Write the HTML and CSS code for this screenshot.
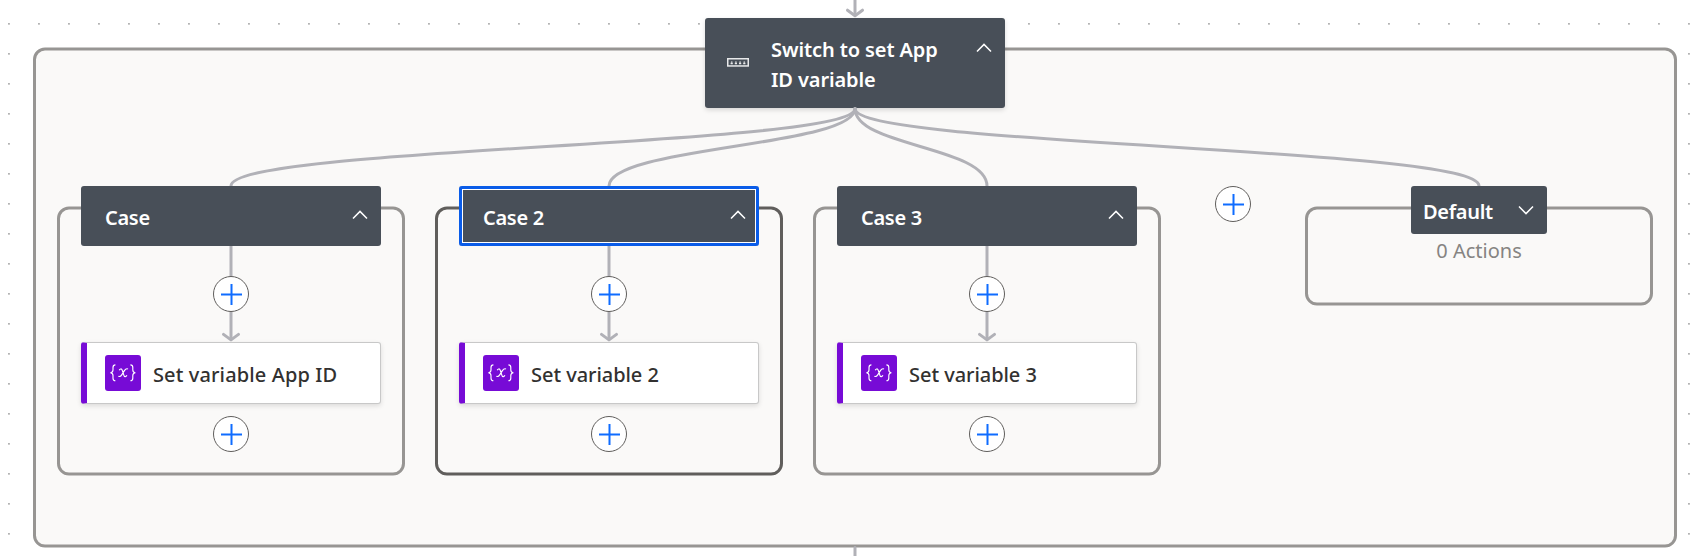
FILE: index.html
```html
<!DOCTYPE html>
<html lang="en">
<head>
<meta charset="utf-8">
<title>Flow designer</title>
<link rel="stylesheet" href="styles.css">
</head>
<body>
<main class="canvas">
  <svg class="graph" width="1693" height="556" viewBox="0 0 1693 556" aria-hidden="true">
    <defs>
      <pattern id="grid" x="8" y="23" width="30" height="30" patternUnits="userSpaceOnUse">
        <rect class="dot" x="0.1" y="0.1" width="1.7" height="1.5"/>
      </pattern>
      <path id="head" d="M-7.5 -7 L0 -1.5 L7.5 -7"/>
      <g id="variable">
        <path d="M10.4 9.9C8.3 9.9 8 10.9 8 12.4v2.7c0 1.6-.8 2.5-2.6 2.7C7.2 18 8 18.9 8 20.5v2.7c0 1.5.3 2.5 2.4 2.5M25.4 9.9c2.1 0 2.4 1 2.4 2.5v2.7c0 1.6.8 2.5 2.6 2.7-1.8.2-2.6 1.1-2.6 2.7v2.7c0 1.5-.3 2.5-2.4 2.5"/>
        <path d="M14.2 15.2c.7-1.3 2.3-2 3-.1l1.8 5.5c.6 1.8 2 1.2 2.9-.3M23 14c-1.3-.7-2.6.1-3.6 1.6l-2.5 4c-1 1.6-2.1 2.3-3.5 1.7"/>
      </g>
    </defs>
    <rect width="1693" height="556" fill="url(#grid)"/>
    <rect class="frame" x="34.5" y="49.1" width="1641" height="497" rx="10.5"/>
    <rect class="frame" x="58.5" y="208.1" width="345" height="266" rx="10.5"/>
    <rect class="frame frame-selected" x="436.5" y="208.1" width="345" height="266" rx="10.5"/>
    <rect class="frame" x="814.5" y="208.1" width="345" height="266" rx="10.5"/>
    <rect class="frame" x="1306.5" y="208.1" width="345" height="96" rx="10.5"/>
    <g class="edge">
      <path d="M855 0V15"/><use href="#head" x="855" y="17.2"/>
      <path d="M855 547.6V556"/>
      <path d="M231 245V339"/><use href="#head" x="231" y="341.4"/>
      <path d="M609 245V339"/><use href="#head" x="609" y="341.4"/>
      <path d="M987 245V339"/><use href="#head" x="987" y="341.4"/>
    </g>
  </svg>

  <section class="node header switch">
    <svg class="switch-icon" width="22" height="9" viewBox="0 0 22 9"><rect x=".75" y=".75" width="20.5" height="7.2"/><path d="M3.6 5.4h2.2M7.8 5.4H10M12 5.4h2.2M16.2 5.4h2.2M4.7 3.6v1M8.9 3.6v1M13.1 3.6v1M17.3 3.6v1"/></svg>
    <h1 class="title t-switch">Switch to set App<br>ID variable</h1>
    <svg class="chevron" width="16" height="10" viewBox="0 0 16 10"><path d="M1 8.6 8 1.4l7 7.2"/></svg>
  </section>

  <svg class="graph" width="1693" height="556" viewBox="0 0 1693 556" aria-hidden="true">
    <g class="edge">
      <path d="M855 108.4C855 146.6 231 146.6 231 186"/>
      <path d="M855 108.4C855 146.6 609 146.6 609 186"/>
      <path d="M855 108.4C855 146.6 987 146.6 987 186"/>
      <path d="M855 108.4C855 146.6 1479 146.6 1479 186"/>
    </g>
  </svg>

  <section class="node branch case-1">
    <header class="header case-header"><h2 class="title">Case</h2><svg class="chevron" width="16" height="10" viewBox="0 0 16 10"><path d="M1 8.6 8 1.4l7 7.2"/></svg></header>
    <button class="add" aria-label="Insert action"><svg width="22" height="22" viewBox="0 0 22 22"><path d="M11.5 1v21M1 11.5h21"/></svg></button>
    <article class="card"><svg class="var-icon" width="36" height="36" viewBox="0 0 36 36"><use href="#variable"/></svg><h3 class="title t-app">Set variable App ID</h3></article>
    <button class="add add-last" aria-label="Add action"><svg width="22" height="22" viewBox="0 0 22 22"><path d="M11.5 1v21M1 11.5h21"/></svg></button>
  </section>

  <section class="node branch case-2">
    <header class="header case-header selected"><h2 class="title">Case 2</h2><svg class="chevron" width="16" height="10" viewBox="0 0 16 10"><path d="M1 8.6 8 1.4l7 7.2"/></svg></header>
    <button class="add" aria-label="Insert action"><svg width="22" height="22" viewBox="0 0 22 22"><path d="M11.5 1v21M1 11.5h21"/></svg></button>
    <article class="card"><svg class="var-icon" width="36" height="36" viewBox="0 0 36 36"><use href="#variable"/></svg><h3 class="title">Set variable 2</h3></article>
    <button class="add add-last" aria-label="Add action"><svg width="22" height="22" viewBox="0 0 22 22"><path d="M11.5 1v21M1 11.5h21"/></svg></button>
  </section>

  <section class="node branch case-3">
    <header class="header case-header"><h2 class="title">Case 3</h2><svg class="chevron" width="16" height="10" viewBox="0 0 16 10"><path d="M1 8.6 8 1.4l7 7.2"/></svg></header>
    <button class="add" aria-label="Insert action"><svg width="22" height="22" viewBox="0 0 22 22"><path d="M11.5 1v21M1 11.5h21"/></svg></button>
    <article class="card"><svg class="var-icon" width="36" height="36" viewBox="0 0 36 36"><use href="#variable"/></svg><h3 class="title">Set variable 3</h3></article>
    <button class="add add-last" aria-label="Add action"><svg width="22" height="22" viewBox="0 0 22 22"><path d="M11.5 1v21M1 11.5h21"/></svg></button>
  </section>

  <div class="node new-case"><button class="add" aria-label="Add case"><svg width="22" height="22" viewBox="0 0 22 22"><path d="M11.5 1v21M1 11.5h21"/></svg></button></div>

  <section class="node default">
    <header class="header default-header"><h2 class="title">Default</h2><svg class="chevron" width="16" height="10" viewBox="0 0 16 10"><path d="M1 1.4l7 7.2 7-7.2"/></svg></header>
    <p class="count">0 Actions</p>
  </section>
</main>
</body>
</html>
```
FILE: styles.css
```css
* { box-sizing: border-box; }
body { margin: 0; font-family: "Noto Sans", "Open Sans", sans-serif; }
.canvas { position: relative; width: 1693px; height: 556px; overflow: hidden; background: #fff; }
.graph { position: absolute; left: 0; top: 0; }
.dot { fill: #a0a0a0; }
.frame { fill: #faf9f8; stroke: #979593; stroke-width: 3; }
.frame-selected { stroke: #605e5c; }
.edge { fill: none; stroke: #b1b1b7; stroke-width: 3; stroke-linecap: round; stroke-linejoin: round; }

.node { position: absolute; }
.title { margin: 0; font-size: 20px; line-height: 30px; font-weight: 600; letter-spacing: -0.3px; white-space: nowrap; }
.t-switch { letter-spacing: -0.1px; }
.header { display: flex; background: #484f58; color: #fff; border-radius: 3px; }
.chevron { fill: none; stroke: #fff; stroke-width: 1.5; flex: none; }

.switch { left: 705px; top: 18px; width: 300px; height: 90px; padding: 17px 13px 0 22px; box-shadow: 0 2px 5px rgba(0, 0, 0, .14); }
.switch-icon { margin: 23px 22px 0 0; fill: none; stroke: #e8e9ea; stroke-width: 1.5; flex: none; }
.switch .chevron { margin: 8px 0 0 auto; }

.branch { top: 186px; width: 300px; display: flex; flex-direction: column; align-items: center; }
.case-1 { left: 81px; }
.case-2 { left: 459px; }
.case-3 { left: 837px; }
.case-header { width: 300px; height: 60px; padding: 17px 13px 0 24px; justify-content: space-between; }
.case-header .chevron { margin-top: 7px; }
.selected { box-shadow: inset 0 0 0 3px #0a5ce8, inset 0 0 0 4px #fff; }

.add { display: grid; place-items: center; width: 36px; height: 36px; margin: 30px 0 0; padding: 0; border: 1px solid #605e5c; border-radius: 50%; background: #fff; }
.add svg { fill: none; stroke: #0f6cff; stroke-width: 2; }
.add-last { margin-top: 12px; }

.card { display: flex; align-items: center; width: 300px; height: 62px; margin-top: 30px; padding: 0 0 0 18px; background: #fff; border: 1px solid #c8c8c8; border-left: 6px solid #770bd6; border-radius: 3px; box-shadow: 0 2px 5px rgba(0, 0, 0, .12); color: #323130; }
.card .title { padding-top: 4px; font-weight: 500; letter-spacing: -0.05px; }
.card .t-app { letter-spacing: 0.12px; }
.var-icon { margin: 0 12px 0 0; background: #770bd6; border-radius: 3px; fill: none; stroke: #fff; stroke-width: 1.15; }

.new-case { left: 1215px; top: 186px; }
.new-case .add { margin: 0; }

.default { left: 1411px; top: 186px; width: 136px; text-align: center; }
.default-header { height: 48px; padding: 11px 13px 0 12px; justify-content: space-between; }
.default-header .chevron { margin-top: 8px; }
.count { margin: 2px 0 0; font-size: 20px; line-height: 30px; letter-spacing: 0; color: #868482; }
```
